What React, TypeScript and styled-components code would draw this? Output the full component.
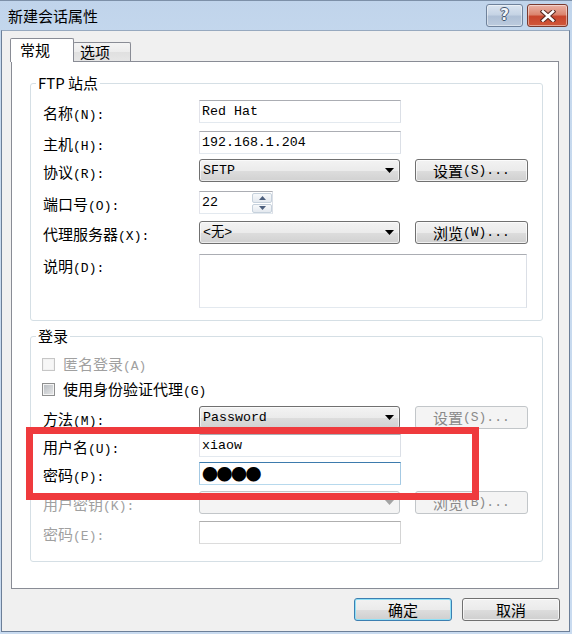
import styled, { createGlobalStyle } from 'styled-components';

const CJK = `"Noto Sans CJK SC", "Noto Sans", sans-serif`;
const MONO = `"Liberation Mono", "Noto Sans CJK SC", monospace`;

const GlobalStyle = createGlobalStyle`
	html, body {
		margin: 0;
		padding: 0;
		background: #ffffff;
	}
	body {
		font-family: ${CJK};
		font-size: 15px;
		color: #000;
	}
	* {
		box-sizing: border-box;
	}
`;

const Arrow = ({ color = '#000' }: { color?: string }) => (
	<svg width="9" height="5" viewBox="0 0 9 5">
		<path d="M0 0h9L4.5 5z" fill={color} />
	</svg>
);

const Field = ({ label, hotkey, disabled }: { label: string; hotkey: string; disabled?: boolean }) => (
	<FieldLabel $disabled={disabled}>
		{label}
		<Key>({hotkey}):</Key>
	</FieldLabel>
);

const App = () => {
	return (
		<>
			<GlobalStyle />
			<Window>
				<TitleBar>
					<Title>新建会话属性</Title>
					<CaptionButtons>
						<CaptionButton $variant="help">
							<HelpGlyph>?</HelpGlyph>
						</CaptionButton>
						<CaptionButton $variant="close">
							<svg width="16" height="12" viewBox="0 0 16 12">
								<path d="M3 1.5l10 9M13 1.5l-10 9" stroke="#5a2a22" strokeWidth="4.6" strokeLinecap="square" />
								<path d="M3 1.5l10 9M13 1.5l-10 9" stroke="#fff" strokeWidth="2.6" strokeLinecap="square" />
							</svg>
						</CaptionButton>
					</CaptionButtons>
				</TitleBar>
				<Client>
					<TabStrip>
						<Tab $active>常规</Tab>
						<Tab>选项</Tab>
					</TabStrip>
					<Panel>
						<GroupBox $pb={12}>
							<GroupCaption>FTP 站点</GroupCaption>
							<Row $mt={8}>
								<Field label="名称" hotkey="N" />
								<TextBox $w={202}>Red Hat</TextBox>
							</Row>
							<Row $mt={8}>
								<Field label="主机" hotkey="H" />
								<TextBox $w={202}>192.168.1.204</TextBox>
							</Row>
							<Row $mt={5}>
								<Field label="协议" hotkey="R" />
								<ComboBox>
									<span>SFTP</span>
									<Arrow />
								</ComboBox>
								<PushButton>
									设置<Key>(S)...</Key>
								</PushButton>
							</Row>
							<Row $mt={9}>
								<Field label="端口号" hotkey="O" />
								<TextBox $w={74}>
									<Value>22</Value>
									<Spinner>
										<SpinButton>
											<svg width="7" height="4" viewBox="0 0 7 4">
												<path d="M0 4h7L3.5 0z" fill="#4c5f7d" />
											</svg>
										</SpinButton>
										<SpinButton>
											<svg width="7" height="4" viewBox="0 0 7 4">
												<path d="M0 0h7L3.5 4z" fill="#4c5f7d" />
											</svg>
										</SpinButton>
									</Spinner>
								</TextBox>
							</Row>
							<Row $mt={7}>
								<Field label="代理服务器" hotkey="X" />
								<ComboBox>
									<span>&lt;无&gt;</span>
									<Arrow />
								</ComboBox>
								<PushButton>
									浏览<Key>(W)...</Key>
								</PushButton>
							</Row>
							<Row $mt={10} $top>
								<Field label="说明" hotkey="D" />
								<TextBox $w={328} $h={54} />
							</Row>
						</GroupBox>

						<GroupBox $pb={17} $mt={15}>
							<GroupCaption>登录</GroupCaption>
							<CheckRow $mt={10} $disabled>
								<Checkbox $disabled />
								<span>
									匿名登录<Key>(A)</Key>
								</span>
							</CheckRow>
							<CheckRow $mt={7}>
								<Checkbox />
								<span>
									使用身份验证代理<Key>(G)</Key>
								</span>
							</CheckRow>
							<Row $mt={8}>
								<Field label="方法" hotkey="M" />
								<ComboBox>
									<span>Password</span>
									<Arrow />
								</ComboBox>
								<PushButton $disabled>
									设置<Key>(S)...</Key>
								</PushButton>
							</Row>
							<Row $mt={5}>
								<Field label="用户名" hotkey="U" />
								<TextBox $w={202}>xiaow</TextBox>
							</Row>
							<Row $mt={5}>
								<Field label="密码" hotkey="P" />
								<TextBox $w={202} $focused>
									<Dots>●●●●</Dots>
								</TextBox>
							</Row>
							<Row $mt={6}>
								<Field label="用户密钥" hotkey="K" disabled />
								<ComboBox $disabled>
									<span />
									<Arrow color="#a3a3a3" />
								</ComboBox>
								<PushButton $disabled>
									浏览<Key>(B)...</Key>
								</PushButton>
							</Row>
							<Row $mt={7}>
								<Field label="密码" hotkey="E" disabled />
								<TextBox $w={202} $disabled />
							</Row>
						</GroupBox>
					</Panel>
					<Footer>
						<PushButton $w={98} $default>
							确定
						</PushButton>
						<PushButton $w={98}>取消</PushButton>
					</Footer>
				</Client>
				<Highlight />
			</Window>
		</>
	);
};

const Window = styled.div`
	position: relative;
	width: 572px;
	height: 634px;
	display: flex;
	flex-direction: column;
	background: linear-gradient(#c0d4eb, #c6d9ee 60px, #c9dbf0);
	overflow: hidden;
`;

const TitleBar = styled.div`
	height: 30px;
	flex: none;
	display: flex;
	align-items: flex-start;
	padding: 0 4px 0 8px;
	border-top: 1px solid #7d90a8;
`;

const Title = styled.div`
	flex: 1;
	line-height: 30px;
	font-size: 15px;
	color: #000;
`;

const CaptionButtons = styled.div`
	display: flex;
	gap: 4px;
	margin-top: 3px;
`;

const CaptionButton = styled.div<{ $variant: 'help' | 'close' }>`
	width: ${(p) => (p.$variant === 'close' ? 41 : 37)}px;
	height: 23px;
	display: flex;
	align-items: center;
	justify-content: center;
	border-radius: 3px;
	border: 1px solid ${(p) => (p.$variant === 'close' ? '#7a3a2e' : '#6f829b')};
	background: ${(p) =>
		p.$variant === 'close'
			? 'linear-gradient(#eab2a5, #dc8670 45%, #c8452c 55%, #d0583b)'
			: 'linear-gradient(#dae4f0, #c6d4e5 45%, #afc0d6 55%, #bccbde)'};
	box-shadow: inset 0 0 0 1px rgba(255, 255, 255, 0.45);
`;

const HelpGlyph = styled.span`
	font-family: "DejaVu Sans", sans-serif;
	font-weight: bold;
	font-size: 15px;
	line-height: 1;
	color: #f4f6f9;
	text-shadow: -1px 0 #44566f, 1px 0 #44566f, 0 -1px #44566f, 0 1px #44566f;
`;

const Client = styled.div`
	flex: 1;
	margin: 0 2px 2px 1px;
	background: #f0f0f0;
	border: 1px solid #6c7f98;
	border-top-color: #97a9bf;
	padding: 7px 10px 0 9px;
	display: flex;
	flex-direction: column;
`;

const TabStrip = styled.div`
	display: flex;
	align-items: flex-end;
	height: 23px;
	margin-left: -1px;
	position: relative;
	z-index: 1;
`;

const Tab = styled.div<{ $active?: boolean }>`
	width: ${(p) => (p.$active ? 64 : 58)}px;
	height: ${(p) => (p.$active ? 24 : 19)}px;
	margin-bottom: ${(p) => (p.$active ? -1 : 0)}px;
	margin-left: ${(p) => (p.$active ? 0 : -1)}px;
	padding-left: ${(p) => (p.$active ? 9 : 6)}px;
	line-height: ${(p) => (p.$active ? 21 : 18)}px;
	border: 1px solid #898c95;
	border-bottom: none;
	border-radius: 2px 2px 0 0;
	background: ${(p) => (p.$active ? '#ffffff' : 'linear-gradient(#f4f4f4, #ececec 50%, #e0e0e0 51%, #e6e6e6)')};
	position: relative;
	z-index: ${(p) => (p.$active ? 2 : 1)};
	font-size: 15px;
`;

const Panel = styled.div`
	height: 528px;
	flex: none;
	border: 1px solid #898c95;
	background: #ffffff;
	padding: 21px 15px 0 18px;
	display: flex;
	flex-direction: column;
`;

const GroupBox = styled.section<{ $pb: number; $mt?: number }>`
	display: flex;
	flex-direction: column;
	margin-top: ${(p) => p.$mt ?? 0}px;
	padding: 0 14px ${(p) => p.$pb}px 11px;
	border: 1px solid #d5dfe5;
	border-radius: 3px;
`;

const GroupCaption = styled.div`
	align-self: flex-start;
	margin: -10px 0 0 -6px;
	padding: 0 2px;
	background: #ffffff;
	line-height: 18px;
	font-size: 15px;
	white-space: nowrap;
`;

const Row = styled.div<{ $mt: number; $top?: boolean }>`
	display: flex;
	align-items: ${(p) => (p.$top ? 'flex-start' : 'center')};
	margin-top: ${(p) => p.$mt}px;
`;

const FieldLabel = styled.label<{ $disabled?: boolean }>`
	width: 157px;
	flex: none;
	padding: 2px 0 0 1px;
	line-height: 20px;
	white-space: nowrap;
	font-size: 15px;
	color: ${(p) => (p.$disabled ? '#a0a0a0' : '#000')};
`;

const Key = styled.span`
	font-family: ${MONO};
	font-size: 13px;
	line-height: 0;
`;

const TextBox = styled.div<{ $w: number; $h?: number; $focused?: boolean; $disabled?: boolean }>`
	width: ${(p) => p.$w}px;
	height: ${(p) => p.$h ?? 23}px;
	display: flex;
	align-items: center;
	padding-left: 2px;
	border: 1px solid;
	border-color: ${(p) =>
		p.$focused
			? '#3d7bad #a4c9e3 #b7d9ed #a4c9e3'
			: p.$disabled
				? '#afafaf #d4d4d4 #dcdcdc #d4d4d4'
				: '#abadb3 #dbdfe6 #e3e9ef #e2e3ea'};
	background: #ffffff;
	font-family: ${MONO};
	font-size: 13.3px;
	line-height: 21px;
	white-space: nowrap;
`;

const Value = styled.span`
	flex: 1;
`;

const Spinner = styled.div`
	width: 20px;
	height: 21px;
	display: flex;
	flex-direction: column;
	gap: 1px;
	padding: 1px 0 0;
`;

const SpinButton = styled.div`
	flex: 1;
	display: flex;
	align-items: center;
	justify-content: center;
	border: 1px solid #c6d1dc;
	border-radius: 2px;
	background: linear-gradient(#f7f9fb, #e4e9ef);
`;

const Dots = styled.span`
	font-family: ${CJK};
	font-size: 16px;
	letter-spacing: -1.5px;
	line-height: 21px;
`;

const ComboBox = styled.div<{ $disabled?: boolean }>`
	width: 202px;
	height: 23px;
	display: flex;
	align-items: center;
	justify-content: space-between;
	padding: 0 5px 0 3px;
	border: 1px solid ${(p) => (p.$disabled ? '#c2c6c9' : '#707070')};
	border-radius: 3px;
	background: ${(p) =>
		p.$disabled ? '#f4f4f4' : 'linear-gradient(#f3f3f3, #ebebeb 50%, #dddddd 51%, #d1d1d1)'};
	box-shadow: ${(p) => (p.$disabled ? 'none' : 'inset 0 0 0 1px rgba(255, 255, 255, 0.6)')};
	font-family: ${MONO};
	font-size: 13.3px;
	line-height: 21px;
	white-space: nowrap;
`;

const PushButton = styled.div<{ $w?: number; $disabled?: boolean; $default?: boolean }>`
	width: ${(p) => p.$w ?? 114}px;
	height: 23px;
	margin-left: ${(p) => (p.$w ? 0 : 15)}px;
	display: flex;
	align-items: center;
	justify-content: center;
	border: 1px solid ${(p) => (p.$disabled ? '#c2c6c9' : p.$default ? '#3c7fb1' : '#707070')};
	border-radius: 3px;
	background: ${(p) =>
		p.$disabled ? '#f4f4f4' : 'linear-gradient(#f2f2f2, #ebebeb 50%, #dddddd 51%, #cfcfcf)'};
	box-shadow: ${(p) =>
		p.$disabled ? 'none' : p.$default ? 'inset 0 0 0 1px #8fe0f6' : 'inset 0 0 0 1px rgba(255, 255, 255, 0.7)'};
	color: ${(p) => (p.$disabled ? '#8a8a8a' : '#000')};
	font-size: 15px;
	line-height: 21px;
	white-space: nowrap;
`;

const CheckRow = styled.div<{ $mt: number; $disabled?: boolean }>`
	display: flex;
	align-items: center;
	gap: 8px;
	height: 18px;
	margin-top: ${(p) => p.$mt}px;
	font-size: 15px;
	line-height: 18px;
	color: ${(p) => (p.$disabled ? '#a0a0a0' : '#000')};
	white-space: nowrap;
`;

const Checkbox = styled.span<{ $disabled?: boolean }>`
	width: 13px;
	height: 13px;
	flex: none;
	border: 1px solid ${(p) => (p.$disabled ? '#c6c6c6' : '#8e8f8f')};
	background: ${(p) => (p.$disabled ? '#f7f7f7' : 'linear-gradient(135deg, #b6babf, #e8e9ea)')};
	box-shadow: inset 0 0 0 1px ${(p) => (p.$disabled ? '#f2f2f2' : '#f4f4f4')};
`;

const Footer = styled.div`
	display: flex;
	justify-content: flex-end;
	gap: 10px;
	margin: 9px -1px 0 0;
`;

const Highlight = styled.div`
	position: absolute;
	left: 26px;
	top: 427px;
	width: 453px;
	height: 73px;
	border: 7px solid #ef3a3d;
	pointer-events: none;
`;

export default App;
